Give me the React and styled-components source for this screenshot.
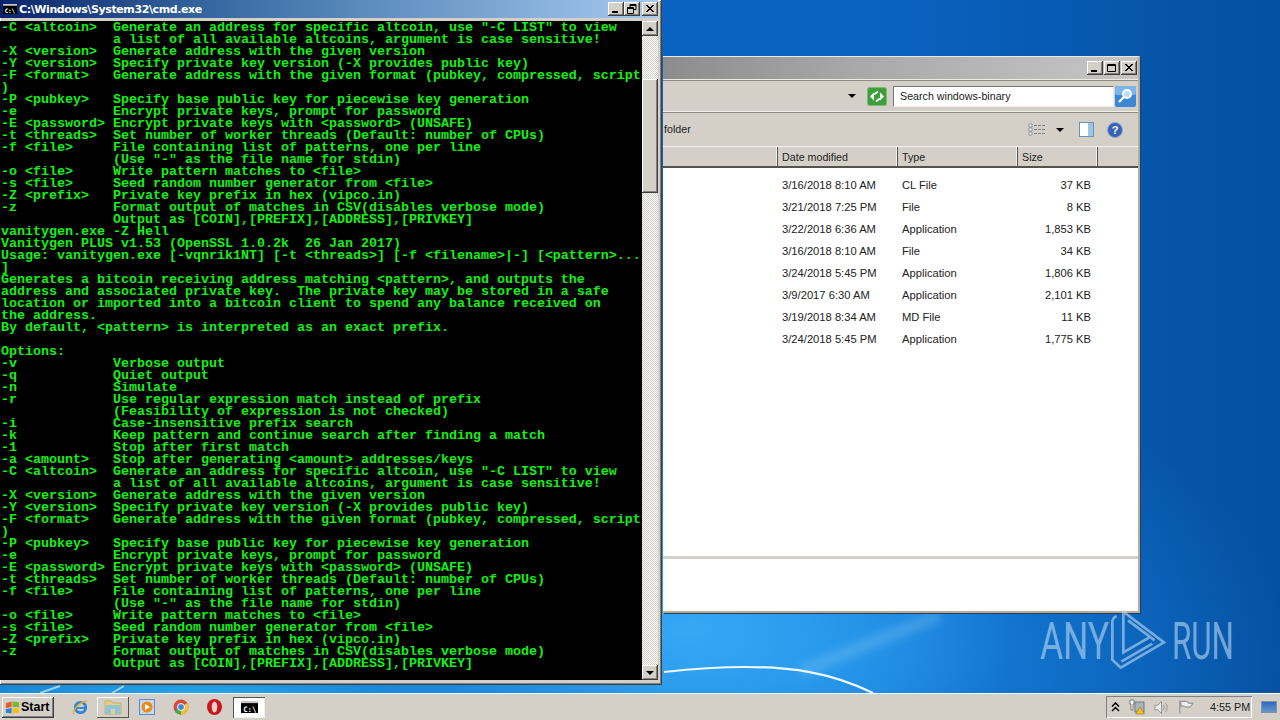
import styled, { createGlobalStyle } from "styled-components"

const GlobalStyle = createGlobalStyle`
  html, body {
    margin: 0;
    padding: 0;
    width: 1280px;
    height: 720px;
    overflow: hidden;
  }
`

const help = `-C <altcoin>  Generate an address for specific altcoin, use "-C LIST" to view
              a list of all available altcoins, argument is case sensitive!
-X <version>  Generate address with the given version
-Y <version>  Specify private key version (-X provides public key)
-F <format>   Generate address with the given format (pubkey, compressed, script
)
-P <pubkey>   Specify base public key for piecewise key generation
-e            Encrypt private keys, prompt for password
-E <password> Encrypt private keys with <password> (UNSAFE)
-t <threads>  Set number of worker threads (Default: number of CPUs)
-f <file>     File containing list of patterns, one per line
              (Use "-" as the file name for stdin)
-o <file>     Write pattern matches to <file>
-s <file>     Seed random number generator from <file>
-Z <prefix>   Private key prefix in hex (vipco.in)
-z            Format output of matches in CSV(disables verbose mode)
              Output as [COIN],[PREFIX],[ADDRESS],[PRIVKEY]`

const consoleText = `${help}
vanitygen.exe -Z Hell
Vanitygen PLUS v1.53 (OpenSSL 1.0.2k  26 Jan 2017)
Usage: vanitygen.exe [-vqnrik1NT] [-t <threads>] [-f <filename>|-] [<pattern>...
]
Generates a bitcoin receiving address matching <pattern>, and outputs the
address and associated private key.  The private key may be stored in a safe
location or imported into a bitcoin client to spend any balance received on
the address.
By default, <pattern> is interpreted as an exact prefix.

Options:
-v            Verbose output
-q            Quiet output
-n            Simulate
-r            Use regular expression match instead of prefix
              (Feasibility of expression is not checked)
-i            Case-insensitive prefix search
-k            Keep pattern and continue search after finding a match
-1            Stop after first match
-a <amount>   Stop after generating <amount> addresses/keys
${help}`

const files = [
  { date: "3/16/2018 8:10 AM", type: "CL File", size: "37 KB" },
  { date: "3/21/2018 7:25 PM", type: "File", size: "8 KB" },
  { date: "3/22/2018 6:36 AM", type: "Application", size: "1,853 KB" },
  { date: "3/16/2018 8:10 AM", type: "File", size: "34 KB" },
  { date: "3/24/2018 5:45 PM", type: "Application", size: "1,806 KB" },
  { date: "3/9/2017 6:30 AM", type: "Application", size: "2,101 KB" },
  { date: "3/19/2018 8:34 AM", type: "MD File", size: "11 KB" },
  { date: "3/24/2018 5:45 PM", type: "Application", size: "1,775 KB" },
]

const Desktop = styled.div`
  width: 1280px;
  height: 720px;
  display: flex;
  flex-direction: column;
  overflow: hidden;
  font-family: "Liberation Sans", Arial, sans-serif;
  font-size: 11.2px;
  color: #222;
`
const Wallpaper = styled.div`
  position: relative;
  flex: 1;
  background:
    radial-gradient(ellipse 330px 190px at 690px 630px, #35a9f4 0%, rgba(40, 150, 235, 0) 100%),
    radial-gradient(ellipse 520px 300px at 780px 660px, #1a86e2 0%, rgba(20, 120, 215, 0) 100%),
    radial-gradient(ellipse 420px 40px at 200px 695px, #27a8ec 0%, rgba(30, 150, 230, 0) 100%),
    linear-gradient(90deg, #0a66c6 0%, #0a62bf 70%, #044f9f 100%);
`
const WallpaperArt = styled.svg`
  position: absolute;
  left: 0;
  top: 0;
`
const Bevel = styled.div`
  background: #d4d0c8;
  box-shadow: inset -1px -1px 0 #404040, inset 1px 1px 0 #ffffff, inset -2px -2px 0 #808080, inset 2px 2px 0 #d4d0c8;
`
const ConsoleWindow = styled(Bevel)`
  position: absolute;
  left: 0;
  top: 0;
  width: 662px;
  height: 685px;
  box-sizing: border-box;
  padding: 0 4px 5px 0;
  display: flex;
  flex-direction: column;
`
const TitleBar = styled.div`
  height: 18px;
  flex: none;
  display: flex;
  align-items: center;
  gap: 2px;
  padding-left: 3px;
  background: linear-gradient(90deg, #0a246a 0%, #3a6ea5 35%, #a6caf0 100%);
  color: #fff;
  font-family: "DejaVu Sans", sans-serif;
  font-size: 11px;
  font-weight: 700;
  letter-spacing: -0.4px;
`
const TitleText = styled.span`
  flex: 1;
  white-space: nowrap;
`
const WinButtons = styled.div`
  display: flex;
  align-items: center;
  gap: ${(p) => p.$gap}px;
`
const WinButton = styled(Bevel)`
  width: 16px;
  height: 14px;
  margin-left: ${(p) => p.$ml || 0}px;
  display: flex;
  align-items: center;
  justify-content: center;
`
const ConsoleBody = styled.div`
  flex: 1;
  min-height: 0;
  display: flex;
  margin-top: 3px;
`
const Terminal = styled.pre`
  flex: 1;
  margin: 0;
  padding: 1px 0 0 1px;
  background: #000;
  color: #14f014;
  font-family: "Liberation Mono", monospace;
  font-size: 13.33px;
  font-weight: 700;
  line-height: 12px;
`
const ScrollBar = styled.div`
  width: 16px;
  flex: none;
  display: flex;
  flex-direction: column;
  background: repeating-conic-gradient(#d4d0c8 0 25%, #ffffff 0 50%) 0 0 / 2px 2px;
`
const ScrollButton = styled(Bevel)`
  height: 15px;
  flex: none;
  display: flex;
  align-items: center;
  justify-content: center;
`
const ScrollThumb = styled(Bevel)`
  height: 114px;
  margin-top: 43px;
  margin-bottom: auto;
`
const Arrow = styled.i`
  display: block;
  flex: none;
  width: 0;
  height: 0;
  margin-left: ${(p) => p.$ml || 0}px;
  border-left: 4px solid transparent;
  border-right: 4px solid transparent;
  ${(p) => (p.$up ? "border-bottom: 4px solid #000;" : "border-top: 4px solid #000;")}
`
const ExplorerWindow = styled.div`
  position: absolute;
  left: 663px;
  top: 56px;
  width: 477px;
  height: 557px;
  display: flex;
  flex-direction: column;
  background: #d4d0c8;
  border-right: 2px solid #b8ab98;
  border-bottom: 2px solid #b8ab98;
  border-top: 1px solid #ece9e0;
  box-sizing: border-box;
  box-shadow: 1px 1px 0 #1c3f6c;
`
const ExplorerTitle = styled.div`
  height: 22px;
  flex: none;
  display: flex;
  justify-content: flex-end;
  align-items: center;
  padding-right: 1px;
  background: linear-gradient(90deg, #8c8c8c 0%, #a8a8a8 40%, #c6c6c6 100%);
`
const AddressBar = styled.div`
  height: 34px;
  flex: none;
  box-sizing: border-box;
  display: flex;
  align-items: center;
  padding-right: 2px;
  border-top: 1px solid #efece6;
  border-bottom: 1px solid #8f8c85;
  box-shadow: inset 0 -1px 0 #f2f0ea, inset 0 1px 0 #8f8c85;
`
const AddressField = styled.div`
  flex: 1;
  height: 22px;
  display: flex;
  align-items: center;
  justify-content: flex-end;
  padding-right: 11px;
`
const SearchBox = styled.div`
  width: 221px;
  height: 21px;
  margin: 0 1px 0 6px;
  display: flex;
  align-items: center;
  padding-left: 6px;
  background: #fff;
  border: 1px solid #777;
  border-right-color: #eee;
  border-bottom-color: #eee;
  box-sizing: border-box;
  font-size: 10.7px;
`
const Toolbar = styled.div`
  height: 33px;
  flex: none;
  display: flex;
  align-items: center;
  padding-right: 15px;
`
const ToolbarText = styled.span`
  flex: 1;
  padding: 0 0 2px 1px;
  font-size: 10.7px;
`
const ToolIcon = styled.span`
  display: flex;
  margin-left: ${(p) => p.$ml}px;
`
const HeaderRow = styled.div`
  height: 22px;
  flex: none;
  display: grid;
  grid-template-columns: 115px 120px 120px 80px 1fr;
  border-top: 1px solid #f4f2ee;
  border-bottom: 2px solid #55534e;
  box-sizing: border-box;
  font-size: 10.7px;
`
const HeaderCell = styled.div`
  display: flex;
  align-items: center;
  padding-left: 4px;
  border-right: 1px solid #55534e;
  box-shadow: inset -1px 0 0 #f4f2ee;
  &:last-child {
    border-right: 0;
    box-shadow: none;
  }
`
const FileList = styled.div`
  flex: 1;
  background: #fff;
  padding-top: 6px;
`
const FileRow = styled.div`
  height: 22px;
  display: grid;
  grid-template-columns: 120px 116px 73px;
  align-items: center;
  margin-left: 119px;
`
const SizeCell = styled.span`
  text-align: right;
`
const DetailsPane = styled.div`
  height: 52px;
  flex: none;
  background: #fff;
  border-top: 3px solid #d4d0c8;
`
const Logo = styled.div`
  position: absolute;
  left: 1040px;
  top: 610px;
  height: 58px;
  display: flex;
  align-items: center;
  color: rgba(190, 220, 245, 0.6);
`
const LogoWord = styled.span`
  font-family: "Roboto", sans-serif;
  font-weight: 400;
  font-size: 52px;
  line-height: 60px;
  display: inline-block;
  width: ${(p) => p.$w}px;
  transform-origin: left center;
  transform: translateY(3px) scaleX(${(p) => p.$sx});
  white-space: nowrap;
`
const LogoSvg = styled.svg`
  flex: none;
  margin: 0 6px 0 8px;
`
const Taskbar = styled.div`
  height: 27px;
  flex: none;
  display: flex;
  align-items: center;
  background: #d4d0c8;
  border-top: 1px solid #ffffff;
  box-sizing: border-box;
  padding-left: 2px;
`
const StartButton = styled(Bevel)`
  width: 52px;
  height: 21px;
  flex: none;
  display: flex;
  align-items: center;
  gap: 1px;
  padding-left: 3px;
  box-sizing: border-box;
  font-weight: 700;
  font-size: 12.5px;
  color: #000;
  margin-right: 14px;
`
const TaskItem = styled.div`
  width: ${(p) => p.$w}px;
  height: 21px;
  margin-left: ${(p) => p.$ml || 0}px;
  flex: none;
  display: flex;
  align-items: center;
  justify-content: center;
  box-sizing: border-box;
  ${(p) => p.$raised && "box-shadow: inset -1px -1px 0 #55534e, inset 1px 1px 0 #fff;"}
  ${(p) => p.$pressed && "background: #fff; box-shadow: inset 1px 1px 0 #55534e, inset -1px -1px 0 #f0f0f0;"}
`
const Tray = styled.div`
  margin-left: auto;
  width: 146px;
  height: 22px;
  flex: none;
  display: flex;
  align-items: center;
  gap: 9px;
  padding-left: 5px;
  box-sizing: border-box;
  box-shadow: inset 1px 1px 0 #808080, inset -1px -1px 0 #fff;
`
const Clock = styled.span`
  margin-left: 7px;
  white-space: nowrap;
  font-size: 10.8px;
`
const ShowDesktop = styled.div`
  width: 16px;
  height: 12px;
  margin: 0 3px 0 9px;
  flex: none;
  background: linear-gradient(180deg, #2a6cc0, #6a94c8);
  border: 1px solid #7f93aa;
  box-sizing: border-box;
`

const CmdIcon = ({ size = 14 }) => (
  <svg width={size} height={size * 0.75} viewBox="0 0 16 12">
    <rect width="16" height="12" fill="#000" />
    <rect width="16" height="2" fill="#c8c8c8" />
    <text x="2" y="10" fill="#fff" fontSize="7" fontFamily="DejaVu Sans Mono" fontWeight="700">C:\</text>
  </svg>
)

const Minimize = () => (
  <svg width="10" height="10"><rect x="1" y="7" width="6" height="2" fill="#000" /></svg>
)
const Maximize = () => (
  <svg width="10" height="10"><path d="M.5 1.500h8v7h-8zM.5 2.500h8" fill="none" stroke="#000" /></svg>
)
const Restore = () => (
  <svg width="10" height="10"><path d="M3 .5h6v5H7M3 1.500h6M.5 3.500h6v6h-6zM.5 4.500h6M3 .5v3" fill="none" stroke="#000" /></svg>
)
const Close = () => (
  <svg width="10" height="10"><path d="M1 1l7 7M8 1L1 8M2 1l7 7M9 1L2 8" stroke="#000" /></svg>
)

const Refresh = () => (
  <svg width="20" height="19" viewBox="0 0 20 19">
    <rect x=".5" y=".5" width="19" height="18" rx="2" fill="#3f9e3c" stroke="#7fb97a" />
    <path d="M3 9.500L7 5.500V13.500ZM17 9.500L13 5.500V13.500Z" fill="#fff" />
    <path d="M7 7.500L11 4.500M13 11.500L9 14.500" stroke="#fff" strokeWidth="1.600" />
  </svg>
)
const SearchIcon = () => (
  <svg width="21" height="21" viewBox="0 0 21 21">
    <rect width="21" height="21" rx="2" fill="#3b86d8" />
    <rect width="21" height="9" rx="2" fill="#7db4ec" />
    <circle cx="12" cy="8" r="4" fill="#bcdcf8" stroke="#fff" strokeWidth="2" />
    <path d="M9 11l-5 5" stroke="#fff" strokeWidth="2.400" />
  </svg>
)
const ViewsIcon = () => (
  <svg width="19" height="13" viewBox="0 0 19 13">
    <path d="M1 1h3v3H1zM1 5h3v3H1zM1 9h3v3H1z" fill="#fff" stroke="#77808c" strokeWidth=".8" />
    <path d="M6 2.500h12M6 6.500h12M6 10.500h12" stroke="#77808c" strokeDasharray="3 1" />
  </svg>
)
const PaneIcon = () => (
  <svg width="15" height="15" viewBox="0 0 15 15">
    <rect x=".5" y=".5" width="14" height="14" fill="#fff" stroke="#6a93b8" />
    <rect x="9" y="1" width="5" height="13" fill="#9cc6e2" />
  </svg>
)
const HelpIcon = () => (
  <svg width="16" height="16" viewBox="0 0 16 16">
    <circle cx="8" cy="8" r="7.500" fill="#3a62b4" stroke="#8fa6d2" />
    <text x="8" y="12" textAnchor="middle" fill="#fff" fontSize="11" fontWeight="700" fontFamily="Liberation Sans">?</text>
  </svg>
)
const LogoMark = () => (
  <LogoSvg width="56" height="60" viewBox="268 210 168 180" fill="none" stroke="currentColor" strokeWidth="8">
    <path d="M288 232Q275 236 275 250V362L300 386L430 310L308 218V340L385 296" />
    <path d="M302 368L395 314" />
    <path d="M322 244L402 304" />
  </LogoSvg>
)
const WindowsFlag = () => (
  <svg width="15" height="15" viewBox="0 0 16 15">
    <path d="M1 3l6-2v6l-6 1z" fill="#e8582a" />
    <path d="M8 1l7 1v5l-7 0z" fill="#7cb82f" />
    <path d="M1 9l6-1v6l-6-1z" fill="#2f86d8" />
    <path d="M8 8h7v5l-7 1z" fill="#f4c020" />
  </svg>
)
const IeIcon = () => (
  <svg width="17" height="17" viewBox="0 0 18 18">
    <circle cx="9" cy="9" r="5.500" fill="none" stroke="#2d86d8" strokeWidth="3" />
    <path d="M4 9.500h10" stroke="#2d86d8" strokeWidth="2" />
    <path d="M2 16C0 12 8 3 16 2" fill="none" stroke="#e8b030" strokeWidth="1.600" />
  </svg>
)
const FolderIcon = () => (
  <svg width="18" height="16" viewBox="0 0 18 16">
    <path d="M1 2h6l2 2h8v11H1z" fill="#e8cf7c" stroke="#b09a50" strokeWidth=".6" />
    <rect x="2" y="6" width="14" height="9" fill="#8cc4e4" />
    <rect x="7" y="10" width="4" height="5" fill="#e8cf7c" />
  </svg>
)
const MediaIcon = () => (
  <svg width="16" height="16" viewBox="0 0 16 16">
    <rect x=".5" y=".5" width="15" height="15" fill="#c6d8ee" stroke="#5a8ccc" />
    <circle cx="8" cy="8" r="5.500" fill="#ee8a1c" />
    <path d="M6 5l5 3-5 3z" fill="#fff" />
  </svg>
)
const ChromeIcon = () => (
  <svg width="16" height="16" viewBox="0 0 16 16">
    <circle cx="8" cy="8" r="7.500" fill="#d8493c" />
    <path d="M8 8L1.500 11.700A7.500 7.500 0 0 0 8 15.500z" fill="#49a84c" />
    <path d="M8 8v7.500A7.500 7.500 0 0 0 15.500 8 7 7 0 0 0 14 4z" fill="#f3c32f" />
    <circle cx="8" cy="8" r="3.500" fill="#3d84e0" stroke="#fff" />
  </svg>
)
const OperaIcon = () => (
  <svg width="15" height="16" viewBox="0 0 15 16">
    <ellipse cx="7.500" cy="8" rx="7.500" ry="8" fill="#c8161c" />
    <ellipse cx="7.500" cy="8" rx="2.800" ry="5.500" fill="#f0d0c8" />
  </svg>
)
const Chevrons = () => (
  <svg width="9" height="10" viewBox="0 0 9 10" fill="none" stroke="#000" strokeWidth="1.500">
    <path d="M1 4.500l3.500-3.500 3.500 3.500M1 9l3.500-3.500L8 9" />
  </svg>
)
const NetworkIcon = () => (
  <svg width="16" height="16" viewBox="0 0 16 16">
    <path d="M1 1h4v4H4v6H2V5H1z" fill="#fff" stroke="#666" strokeWidth=".8" />
    <rect x="6" y="3" width="9" height="10" fill="#a8b4c0" stroke="#666" strokeWidth=".8" />
    <path d="M11 8l4.500 7h-9z" fill="#f2c21c" stroke="#8a6a10" strokeWidth=".5" />
  </svg>
)
const SoundIcon = () => (
  <svg width="15" height="15" viewBox="0 0 16 15" fill="none" stroke="#8f8f8f">
    <path d="M1 5h3l4-4v13l-4-4H1z" fill="#ececec" />
    <path d="M10 5c1 2 1 3 0 5M12.500 3c2 3 2 6 0 9" />
  </svg>
)
const FlagIcon = () => (
  <svg width="16" height="16" viewBox="0 0 17 16" fill="#ececec" stroke="#808080">
    <path d="M2 1v14" />
    <path d="M3 2h7l1 2h5l-3 4h-5l-1-1H3z" />
  </svg>
)

function App() {
  return (
    <>
      <GlobalStyle />
      <Desktop>
        <Wallpaper>
          <WallpaperArt width="1280" height="693" viewBox="0 0 1280 693" fill="none">
            <defs>
              <filter id="glow" x="-20%" y="-50%" width="140%" height="200%">
                <feGaussianBlur stdDeviation="5" />
              </filter>
              <filter id="soft" x="-5%" y="-20%" width="110%" height="140%">
                <feGaussianBlur stdDeviation=".6" />
              </filter>
            </defs>
            <path d="M800 672L940 615" stroke="#8fd2f8" strokeOpacity=".3" strokeWidth="12" filter="url(#glow)" />
            <path d="M664 672C700 668 725 667 745 667C790 667 830 672 873 693" stroke="#eef8ff" strokeWidth="2.200" filter="url(#soft)" />
            <path d="M40 693L60 686M112 693L124 686" stroke="#cdeeff" strokeOpacity=".7" strokeWidth="2" />
          </WallpaperArt>
          <ExplorerWindow>
            <ExplorerTitle>
              <WinButtons $gap={1}>
                <WinButton><Minimize /></WinButton>
                <WinButton><Maximize /></WinButton>
                <WinButton><Close /></WinButton>
              </WinButtons>
            </ExplorerTitle>
            <AddressBar>
              <AddressField><Arrow /></AddressField>
              <Refresh />
              <SearchBox>Search windows-binary</SearchBox>
              <SearchIcon />
            </AddressBar>
            <Toolbar>
              <ToolbarText>folder</ToolbarText>
              <ViewsIcon />
              <Arrow $ml={9} />
              <ToolIcon $ml={15}><PaneIcon /></ToolIcon>
              <ToolIcon $ml={13}><HelpIcon /></ToolIcon>
            </Toolbar>
            <HeaderRow>
              <HeaderCell />
              <HeaderCell>Date modified</HeaderCell>
              <HeaderCell>Type</HeaderCell>
              <HeaderCell>Size</HeaderCell>
              <HeaderCell />
            </HeaderRow>
            <FileList>
              {files.map((f, i) => (
                <FileRow key={i}>
                  <span>{f.date}</span>
                  <span>{f.type}</span>
                  <SizeCell>{f.size}</SizeCell>
                </FileRow>
              ))}
            </FileList>
            <DetailsPane />
          </ExplorerWindow>

          <ConsoleWindow>
            <TitleBar>
              <CmdIcon />
              <TitleText>C:\Windows\System32\cmd.exe</TitleText>
              <WinButtons $gap={0}>
                <WinButton><Minimize /></WinButton>
                <WinButton><Restore /></WinButton>
                <WinButton $ml={2}><Close /></WinButton>
              </WinButtons>
            </TitleBar>
            <ConsoleBody>
              <Terminal>{consoleText}</Terminal>
              <ScrollBar>
                <ScrollButton><Arrow $up /></ScrollButton>
                <ScrollThumb />
                <ScrollButton><Arrow /></ScrollButton>
              </ScrollBar>
            </ConsoleBody>
          </ConsoleWindow>

          <Logo>
            <LogoWord $w={62} $sx={0.68}>ANY</LogoWord>
            <LogoMark />
            <LogoWord $w={60} $sx={0.6}>RUN</LogoWord>
          </Logo>
        </Wallpaper>
        <Taskbar>
          <StartButton><WindowsFlag />Start</StartButton>
          <TaskItem $w={24}><IeIcon /></TaskItem>
          <TaskItem $w={32} $ml={5} $raised><FolderIcon /></TaskItem>
          <TaskItem $w={34} $ml={1}><MediaIcon /></TaskItem>
          <TaskItem $w={34}><ChromeIcon /></TaskItem>
          <TaskItem $w={32}><OperaIcon /></TaskItem>
          <TaskItem $w={32} $ml={3} $pressed><CmdIcon size={17} /></TaskItem>
          <Tray>
            <Chevrons />
            <NetworkIcon />
            <SoundIcon />
            <FlagIcon />
            <Clock>4:55 PM</Clock>
          </Tray>
          <ShowDesktop />
        </Taskbar>
      </Desktop>
    </>
  )
}

export default App
